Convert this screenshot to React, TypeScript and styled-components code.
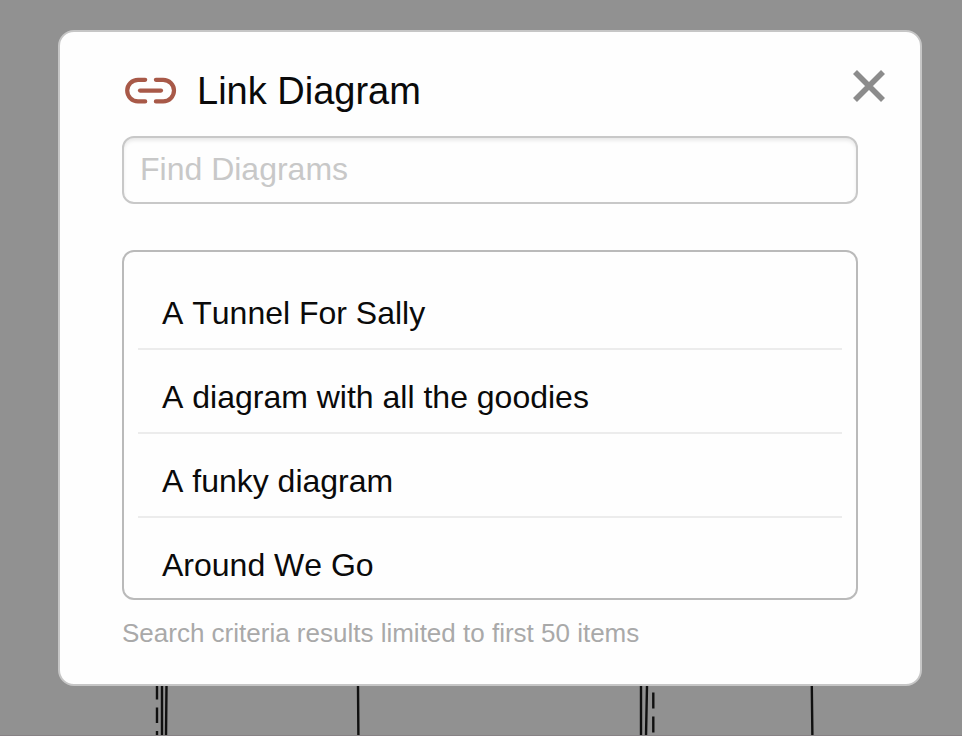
import React from "react";
import styled, { createGlobalStyle } from "styled-components";

const GlobalStyle = createGlobalStyle`
  *, *::before, *::after { box-sizing: border-box; }
  body {
    margin: 0;
    background: #919191;
    font-family: "Liberation Sans", Helvetica, Arial, sans-serif;
    color: #0a0a0a;
  }
`;

const Backdrop = styled.div`
  display: flex;
  flex-direction: column;
  align-items: center;
  width: 962px;
  height: 736px;
  padding: 30px 40px 0 58px;
  background: #919191;
  border-bottom: 1px solid #878285;
  overflow: hidden;
`;

const Modal = styled.section`
  display: flex;
  flex-direction: column;
  flex: none;
  width: 864px;
  height: 656px;
  padding: 35px 62px 0;
  background: #fefefe;
  border: 2px solid #c6c6c6;
  border-radius: 16px;
`;

const Header = styled.header`
  display: flex;
  align-items: center;
  height: 48px;
  margin: 0 -30px 21px 2px;
`;

const Title = styled.h1`
  flex: 1;
  margin: 0 0 0 17px;
  font-size: 38px;
  font-weight: 400;
  line-height: 48px;
  white-space: nowrap;
`;

const CloseButton = styled.button`
  display: flex;
  align-self: flex-start;
  padding: 0;
  margin: 2px 2px 0 0;
  border: 0;
  background: none;
`;

const SearchInput = styled.input`
  flex: none;
  width: 100%;
  height: 68px;
  margin: 0 0 46px;
  padding: 0 16px 2px;
  border: 2px solid #c8c8c8;
  border-radius: 12px;
  background: #fefefe;
  box-shadow: inset 0 3px 4px -1px #e4e4e4;
  font: 32px "Liberation Sans", Helvetica, Arial, sans-serif;
  outline: none;
  &::placeholder { color: #c8c8c8; opacity: 1; }
`;

const DiagramList = styled.ul`
  flex: none;
  height: 350px;
  margin: 0;
  padding: 14px 14px 0;
  list-style: none;
  border: 2px solid #bababa;
  border-radius: 12px;
  overflow: hidden;
`;

const DiagramRow = styled.li`
  height: 84px;
  padding: 23px 24px 0;
  border-bottom: 2px solid #ececec;
  font-size: 32px;
  font-kerning: none;
  line-height: 48px;
  white-space: nowrap;
`;

const Note = styled.p`
  margin: 15px 0 0;
  font-size: 26px;
  line-height: 36px;
  color: #a9a9a9;
  white-space: nowrap;
`;

const CanvasLines = styled.svg`
  display: block;
  flex: none;
  width: 962px;
  height: 50px;
  margin-left: -18px;
`;

const diagrams = [
  "A Tunnel For Sally",
  "A diagram with all the goodies",
  "A funky diagram",
  "Around We Go",
];

const LinkIcon = () => (
  <svg width="56" height="32" viewBox="0 0 56 32" fill="none" stroke="#a85948" strokeWidth="4.2" strokeLinecap="round" aria-hidden="true">
    <path d="M21.2 4.8H14A10.8 10.8 0 0 0 14 26.4H21.2" />
    <path d="M31.9 4.8H39.2A10.8 10.8 0 0 1 39.2 26.4H31.9" />
    <path d="M16 15.6H37" />
  </svg>
);

const CloseIcon = () => (
  <svg width="34" height="34" viewBox="0 0 34 34" stroke="#8c8c8c" strokeWidth="5.6" aria-hidden="true">
    <path d="M3 3L31 31M31 3L3 31" />
  </svg>
);

export default function App() {
  return (
    <>
      <GlobalStyle />
      <Backdrop>
        <Modal role="dialog" aria-labelledby="dialog-title">
          <Header>
            <LinkIcon />
            <Title id="dialog-title">Link Diagram</Title>
            <CloseButton aria-label="Close"><CloseIcon /></CloseButton>
          </Header>
          <SearchInput placeholder="Find Diagrams" aria-label="Find Diagrams" />
          <DiagramList>
            {diagrams.map((name) => <DiagramRow key={name}>{name}</DiagramRow>)}
          </DiagramList>
          <Note>Search criteria results limited to first 50 items</Note>
        </Modal>
        <CanvasLines viewBox="0 0 962 50" stroke="#101010" strokeWidth="2.4" aria-hidden="true">
          <path d="M157 0V13.5M157 21.5V37M157 45V50" />
          <path d="M162 0V50M166.5 0L166 50M358 0L358.4 50" />
          <path d="M641 0V50M647 0L646 50M811.8 0L812.4 50" />
          <path d="M653.3 6.5V22.5M653.3 30.5V46.5" />
        </CanvasLines>
      </Backdrop>
    </>
  );
}
